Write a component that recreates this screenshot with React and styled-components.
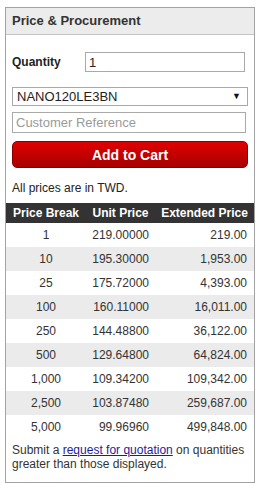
import styled, { createGlobalStyle } from "styled-components";

const GlobalStyle = createGlobalStyle`
  body {
    margin: 0;
    background: #fff;
    font-family: "Liberation Sans", Arial, sans-serif;
    color: #333;
  }
`;

const Page = styled.div`
  padding: 7px 0 0 5px;
`;

const Panel = styled.div`
  width: 248px;
  border: 1px solid #a3a3a3;
  background: #fff;
`;

const PanelHeader = styled.div`
  height: 26px;
  line-height: 26px;
  padding-left: 6px;
  background: #ececec;
  border-bottom: 1px solid #c4c4c4;
  font-size: 13px;
  font-weight: bold;
  color: #333;
`;

const Body = styled.div`
  padding: 0 6px;
`;

const QtyRow = styled.div`
  display: flex;
  align-items: center;
  margin-top: 17px;
  height: 20px;
`;

const Label = styled.label`
  width: 73px;
  font-size: 12px;
  font-weight: bold;
  color: #222;
`;

const TextInput = styled.input`
  box-sizing: border-box;
  width: ${(p) => p.$w}px;
  height: ${(p) => p.$h}px;
  margin: 0;
  padding: 0 3px;
  border: 1px solid #a9a9a9;
  font-family: "Liberation Sans", Arial, sans-serif;
  font-size: 13px;
  color: #222;
  outline: none;
  &::placeholder {
    color: #9a9a9a;
  }
`;

const SelectWrap = styled.div`
  position: relative;
  width: 236px;
  margin-top: 15px;
`;

const Select = styled.select`
  box-sizing: border-box;
  width: 100%;
  height: 19px;
  margin: 0;
  padding: 0 4px;
  appearance: none;
  background: #fff;
  border: 1px solid #a9a9a9;
  border-radius: 0;
  font-family: "Liberation Sans", Arial, sans-serif;
  font-size: 13px;
  color: #222;
`;

const Arrow = styled.span`
  position: absolute;
  right: 7px;
  top: 4px;
  font-size: 9px;
  color: #111;
  pointer-events: none;
`;

const RefField = styled.div`
  margin-top: 6px;
`;

const CartButton = styled.button`
  display: block;
  box-sizing: border-box;
  width: 236px;
  height: 27px;
  margin-top: 8px;
  border: 1px solid #8a0000;
  border-radius: 5px;
  background: linear-gradient(#e00000, #a80000);
  color: #fff;
  font-family: "Liberation Sans", Arial, sans-serif;
  font-size: 14px;
  font-weight: bold;
  cursor: pointer;
`;

const Note = styled.p`
  margin: 13px 0 0;
  font-size: 12px;
  line-height: 14px;
  color: #222;
`;

const Table = styled.table`
  width: 248px;
  margin-top: 8px;
  border-collapse: collapse;
  font-size: 12px;
  color: #333;
`;

const HeadCell = styled.th`
  height: 20px;
  padding: 0;
  background: #333;
  color: #fff;
  font-weight: bold;
  text-align: center;
  width: ${(p) => p.$w}px;
`;

const Row = styled.tr`
  background: ${(p) => (p.$alt ? "#ebebeb" : "#fff")};
`;

const Cell = styled.td`
  height: 24px;
  padding: 0 ${(p) => p.$pr || 0}px 0 0;
  text-align: ${(p) => p.$align || "right"};
`;

const Footer = styled.p`
  margin: 4px 6px 11px;
  font-size: 12px;
  line-height: 14px;
  color: #333;
`;

const Link = styled.a`
  color: #1d1d9b;
  text-decoration: underline;
`;

const prices = [
  ["1", "219.00000", "219.00"],
  ["10", "195.30000", "1,953.00"],
  ["25", "175.72000", "4,393.00"],
  ["100", "160.11000", "16,011.00"],
  ["250", "144.48800", "36,122.00"],
  ["500", "129.64800", "64,824.00"],
  ["1,000", "109.34200", "109,342.00"],
  ["2,500", "103.87480", "259,687.00"],
  ["5,000", "99.96960", "499,848.00"],
];

export default function App() {
  return (
    <Page>
      <GlobalStyle />
      <Panel>
        <PanelHeader>Price &amp; Procurement</PanelHeader>
        <Body>
          <QtyRow>
            <Label>Quantity</Label>
            <TextInput $w={160} $h={20} defaultValue="1" />
          </QtyRow>
          <SelectWrap>
            <Select defaultValue="NANO120LE3BN">
              <option>NANO120LE3BN</option>
            </Select>
            <Arrow>▼</Arrow>
          </SelectWrap>
          <RefField>
            <TextInput $w={234} $h={21} placeholder="Customer Reference" />
          </RefField>
          <CartButton>Add to Cart</CartButton>
          <Note>All prices are in TWD.</Note>
        </Body>
        <Table>
          <thead>
            <tr>
              <HeadCell $w={80}>Price Break</HeadCell>
              <HeadCell $w={69}>Unit Price</HeadCell>
              <HeadCell $w={99}>Extended Price</HeadCell>
            </tr>
          </thead>
          <tbody>
            {prices.map((p, i) => (
              <Row key={p[0]} $alt={i % 2 === 1}>
                <Cell $align="center">{p[0]}</Cell>
                <Cell $pr={6}>{p[1]}</Cell>
                <Cell $pr={7}>{p[2]}</Cell>
              </Row>
            ))}
          </tbody>
        </Table>
        <Footer>
          Submit a <Link href="#">request for quotation</Link> on quantities
          greater than those displayed.
        </Footer>
      </Panel>
    </Page>
  );
}
